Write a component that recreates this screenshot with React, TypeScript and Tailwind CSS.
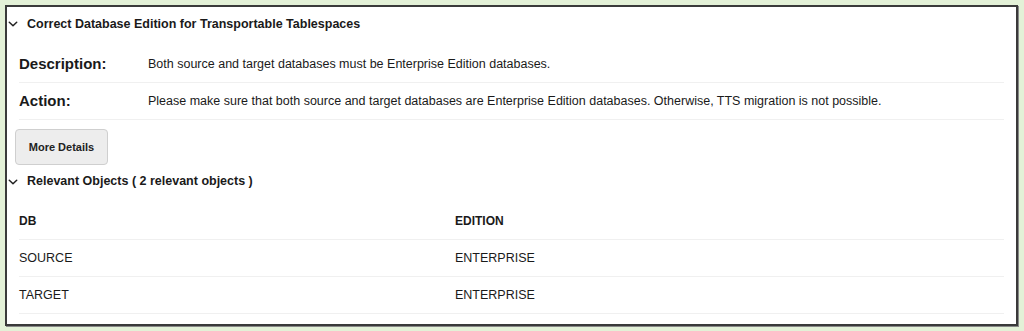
import React from "react";

const Chevron = () => (
  <svg width="10" height="10" viewBox="0 0 10 10" className="shrink-0">
    <path d="M1.3 3.2 L5 6.8 L8.7 3.2" fill="none" stroke="#222" strokeWidth="1.5" strokeLinecap="round" strokeLinejoin="round" />
  </svg>
);

export default function App() {
  const font = { fontFamily: '"Liberation Sans", Arial, sans-serif' };
  return (
    <div className="w-[1024px] h-[331px] bg-[#e3f1d7] pt-[5px] pl-[5px]" style={font}>
      <div className="w-[1013px] h-[321px] border-2 border-[#3a3a3a] bg-white shadow-[1px_1px_0_#888] text-[#1a1a1a]">
        <div className="flex items-center h-[34px] pl-[1px] gap-[9px]">
          <Chevron />
          <span className="text-[12.5px] font-bold">Correct Database Edition for Transportable Tablespaces</span>
        </div>
        <div className="px-[12px] pt-[5px]">
          <div className="flex items-center h-[37px] border-b border-[#f0f0f0]">
            <span className="w-[129px] text-[15px] font-bold">Description:</span>
            <span className="text-[12.5px]">Both source and target databases must be Enterprise Edition databases.</span>
          </div>
          <div className="flex items-center h-[37px] border-b border-[#f0f0f0]">
            <span className="w-[129px] text-[15px] font-bold">Action:</span>
            <span className="text-[12.5px]">Please make sure that both source and target databases are Enterprise Edition databases. Otherwise, TTS migration is not possible.</span>
          </div>
        </div>
        <div className="pl-[8px] pt-[9px]">
          <button className="w-[93px] h-[36px] bg-[#ededed] border border-[#cfcfcf] rounded-[4px] text-[11px] font-bold text-[#222]">More Details</button>
        </div>
        <div className="flex items-center h-[33px] pl-[1px] gap-[9px]">
          <Chevron />
          <span className="text-[12.5px] font-bold">Relevant Objects ( 2 relevant objects )</span>
        </div>
        <div className="px-[12px]">
          <div className="flex items-center h-[42px] border-b border-[#f0f0f0] text-[12px] font-bold pt-[4px]">
            <span className="w-[436px]">DB</span>
            <span>EDITION</span>
          </div>
          <div className="flex items-center h-[37px] border-b border-[#f0f0f0] text-[12.5px]">
            <span className="w-[436px]">SOURCE</span>
            <span>ENTERPRISE</span>
          </div>
          <div className="flex items-center h-[37px] border-b border-[#f0f0f0] text-[12.5px]">
            <span className="w-[436px]">TARGET</span>
            <span>ENTERPRISE</span>
          </div>
        </div>
      </div>
    </div>
  );
}
